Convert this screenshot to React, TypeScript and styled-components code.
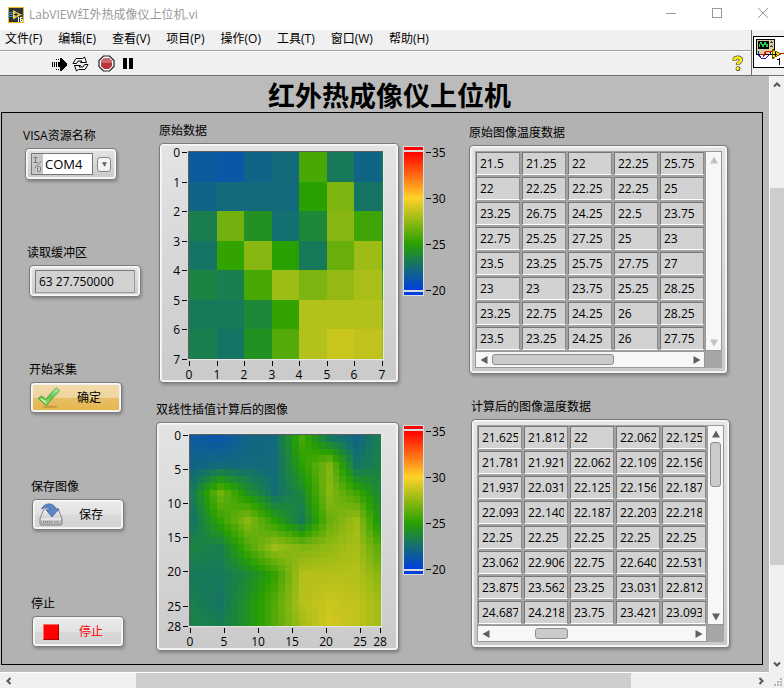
import React from "react";
import styled, { createGlobalStyle, css } from "styled-components";

const GlobalStyle = createGlobalStyle`
  * { box-sizing: border-box; }
  html, body { margin: 0; padding: 0; }
  body {
    font-family: "Open Sans", "Noto Sans CJK SC", sans-serif;
    font-size: 12px;
    line-height: 16px;
    color: #000;
  }
  button, input, select { font: inherit; color: inherit; margin: 0; }
`;

/* ---------- data ---------- */

const SAMPLES = [
  [21.5, 21.25, 22, 22.25, 25.75, 23, 22, 23.5],
  [22, 22.25, 22.25, 22.25, 25, 27, 22.75, 23.5],
  [23.25, 26.75, 24.25, 22.5, 23.75, 27.25, 25.5, 23.5],
  [22.75, 25.25, 27.25, 25, 23, 26.5, 27.75, 23.75],
  [23.5, 23.25, 25.75, 27.75, 27, 27.5, 28, 25.75],
  [23, 23, 23.75, 25.25, 28.25, 28.25, 28.25, 27],
  [23.25, 22.75, 24.25, 26, 28.25, 28.75, 28.5, 27.75],
  [23.5, 23.25, 24.25, 26, 27.75, 29, 28.5, 27.75],
];

const STEPS = 4;

function interpolate(source: number[][]): number[][] {
  const last = source.length - 1;
  const size = last * STEPS + 1;
  return Array.from({ length: size }, (_, r) =>
    Array.from({ length: size }, (_, c) => {
      const r0 = Math.min(Math.floor(r / STEPS), last - 1);
      const c0 = Math.min(Math.floor(c / STEPS), last - 1);
      const fr = r / STEPS - r0;
      const fc = c / STEPS - c0;
      const top = source[r0][c0] * (1 - fc) + source[r0][c0 + 1] * fc;
      const low = source[r0 + 1][c0] * (1 - fc) + source[r0 + 1][c0 + 1] * fc;
      return top * (1 - fr) + low * fr;
    })
  );
}

const RAMP: [number, number[]][] = [
  [20, [0, 62, 224]],
  [25, [40, 160, 0]],
  [30, [255, 210, 40]],
  [35, [255, 0, 0]],
];

function heatColor(value: number): string {
  const i = value < 25 ? 0 : value < 30 ? 1 : 2;
  const [v0, a] = RAMP[i];
  const [v1, b] = RAMP[i + 1];
  const t = (value - v0) / (v1 - v0);
  return `rgb(${a.map((x, k) => Math.round(x + (b[k] - x) * t)).join(",")})`;
}

const FINE = interpolate(SAMPLES);

const RAW_ROWS = SAMPLES.map((row) => row.slice(0, 5).map(String));

const FINE_ROWS = FINE.slice(0, 8).map((row) =>
  row.slice(6, 11).map((v) => String(v).slice(0, 6))
);

const MENUS = ["文件(F)", "编辑(E)", "查看(V)", "项目(P)", "操作(O)", "工具(T)", "窗口(W)", "帮助(H)"];

/* ---------- window chrome ---------- */

const Window = styled.div`
  display: flex;
  flex-direction: column;
  min-height: 100vh;
  background: #f0f0f0;
`;

const TitleBar = styled.header`
  display: flex;
  flex-shrink: 0;
  align-items: center;
  height: 30px;
  padding: 0 8px;
  background: #fff;
  color: #999;
`;

const TitleText = styled.span`
  flex: 1;
  margin-left: 5px;
  font-size: 12px;
`;

const WindowButtons = styled.div`
  display: flex;
  align-items: center;
  padding-bottom: 4px;
`;

const bare = css`
  display: flex;
  align-items: center;
  justify-content: center;
  padding: 0;
  border: 0;
  background: none;
`;

const CaptionButton = styled.button`
  ${bare}
  width: 46px;
  height: 24px;
  &:last-child { width: 45px; margin-right: -9px; }
`;

const Header = styled.div`
  display: flex;
  flex-shrink: 0;
  height: 46px;
  border-bottom: 1px solid #6c6c6c;
  overflow: hidden;
`;

const Bars = styled.div`
  flex: 1;
  min-width: 0;
`;

const MenuBar = styled.nav`
  display: flex;
  align-items: center;
  gap: 16px;
  height: 21px;
  padding: 0 5px 2px;
  border-bottom: 1px solid #a0a0a0;
`;

const MenuButton = styled.button`
  ${bare}
  white-space: nowrap;
`;

const Toolbar = styled.div`
  display: flex;
  align-items: center;
  height: 24px;
  padding: 0 7px 0 51px;
  border-top: 1px solid #fff;
`;

const ToolButton = styled.button<{ $gap?: number }>`
  ${bare}
  margin-right: ${(p) => p.$gap ?? 0}px;
`;

const Spacer = styled.div`
  flex: 1;
`;

const ViIconCell = styled.div`
  width: 33px;
  padding: 6px 0 0 1px;
  border-left: 1px solid #6c6c6c;
  overflow: hidden;
`;

/* ---------- work area ---------- */

const WorkArea = styled.div`
  flex: 1;
  display: grid;
  grid-template-columns: minmax(0, 1fr) 15px;
  grid-template-rows: 1fr 16px;
`;

const Canvas = styled.main`
  display: flex;
  flex-direction: column;
  padding: 0 6px 7px 1px;
  background: #bbb;
`;

const PanelTitle = styled.h1`
  flex-shrink: 0;
  margin: 0;
  height: 36px;
  padding-left: 15px;
  font-size: 27px;
  line-height: 40px;
  font-weight: 700;
  text-align: center;
`;

const FrontPanel = styled.section`
  flex: 1;
  display: grid;
  grid-template-columns: 154px 313px minmax(0, 1fr);
  border: 1px solid #000;
  background: #b2b2b2;
`;

const Column = styled.div<{ $top: number; $gap: number }>`
  display: flex;
  flex-direction: column;
  align-items: flex-start;
  gap: ${(p) => p.$gap}px;
  padding-top: ${(p) => p.$top}px;
`;

const ControlColumn = styled.div`
  padding: 15px 0 0 21px;
`;

const ControlGroup = styled.div<{ $indent: number }>`
  display: flex;
  flex-direction: column;
  align-items: flex-start;
  gap: 4px;
  height: 117px;
  padding-left: ${(p) => p.$indent}px;
  &:last-child { height: auto; }
`;

const Group = styled.div<{ $indent?: number }>`
  display: flex;
  flex-direction: column;
  align-items: flex-start;
  gap: 4px;
  padding-left: ${(p) => p.$indent ?? 0}px;
`;

const Caption = styled.label`
  height: 16px;
  white-space: nowrap;
`;

const bevel = css`
  border: 1px solid #7c7c7c;
  border-radius: 4px;
  box-shadow: inset 0 0 0 1px #f8f8f8, inset 0 0 0 2px #f0f0f0, 1px 2px 3px rgba(0, 0, 0, 0.25);
  background: linear-gradient(#e4e4e4, #cacaca);
`;

const Frame = styled.div`
  ${bevel}
  display: flex;
  padding: 5px;
`;

const FieldFrame = styled.div`
  ${bevel}
  display: flex;
  align-items: center;
  gap: 4px;
  height: 32px;
  margin-left: 2px;
  padding: 0 5px;
`;

const ResourceField = styled.div`
  display: flex;
  width: 62px;
  height: 22px;
  border: 1px solid #777;
  background: #c8c8c8;
`;

const ResourceSelect = styled.select`
  flex: 1;
  min-width: 0;
  appearance: none;
  border: 0;
  padding: 0 0 0 2px;
  background: #fff;
  font-size: 13px;
  border-radius: 0;
`;

const DropButton = styled.button`
  ${bare}
  width: 14px;
  height: 15px;
  border: 1px solid #888;
  border-radius: 3px;
  background: #f2f2f2;
`;

const BufferInput = styled.input`
  width: 100px;
  height: 23px;
  padding: 0 3px;
  border: 1px solid #777;
  border-right-color: #999;
  border-bottom-color: #999;
  background: #d2d2d2;
`;

const ActionButton = styled.button<{ $active?: boolean; $color?: string }>`
  ${bevel}
  display: grid;
  grid-template-columns: 26px 1fr;
  align-items: center;
  justify-items: center;
  width: 92px;
  height: 31px;
  margin-left: 1px;
  padding: 0 5px;
  color: ${(p) => p.$color ?? "#000"};
  background: ${(p) =>
    p.$active
      ? "linear-gradient(#f2dcae 0%, #efd49c 50%, #e6be68 52%, #e5b748 100%)"
      : "linear-gradient(#ebebeb 0%, #e2e2e2 50%, #d9d9d9 52%, #d2d2d2 100%)"};
`;

const ChartRow = styled.div`
  display: flex;
  gap: 4px;
  align-items: flex-start;
`;

const ChartSvg = styled.svg`
  display: block;
  overflow: visible;
  font-family: "Open Sans", sans-serif;
  font-size: 12px;
`;

/* ---------- numeric array ---------- */

const ArrayGrid = styled.div`
  display: grid;
  grid-template-columns: 230px 17px;
  grid-template-rows: 200px 17px;
  background: #a6a6a6;
`;

const DataTable = styled.table`
  border-collapse: separate;
  border-spacing: 0;
  background: #a2a2a2;
`;

const DataCell = styled.td`
  padding: 1px;
`;

const CellBox = styled.div`
  width: 44px;
  height: 23px;
  padding: 3px 3px 0;
  border: 1px solid #777;
  border-right-color: #888;
  border-bottom-color: #fff;
  background: #d2d2d2;
`;

const CellText = styled.span`
  display: block;
  overflow: hidden;
  white-space: nowrap;
`;

const MiniBar = styled.div<{ $vertical?: boolean }>`
  display: flex;
  flex-direction: ${(p) => (p.$vertical ? "column" : "row")};
  align-items: center;
  border: 1px solid #999;
  background: #f7f7f7;
`;

const MiniArrow = styled.button`
  ${bare}
  width: 15px;
  height: 15px;
`;

const MiniTrack = styled.div<{ $vertical?: boolean }>`
  flex: 1;
  display: flex;
  flex-direction: ${(p) => (p.$vertical ? "column" : "row")};
`;

const MiniThumb = styled.div<{ $vertical?: boolean; $start: number; $size: number }>`
  width: ${(p) => (p.$vertical ? 11 : p.$size)}px;
  height: ${(p) => (p.$vertical ? p.$size : 11)}px;
  ${(p) => (p.$vertical ? "margin-top" : "margin-left")}: ${(p) => p.$start}px;
  border: 1px solid #8e8e8e;
  border-radius: 3px;
  background: #cbcbcb;
`;

/* ---------- window scrollbars ---------- */

const ScrollBar = styled.div<{ $vertical?: boolean }>`
  display: flex;
  flex-direction: ${(p) => (p.$vertical ? "column" : "row")};
  ${(p) => (p.$vertical ? "border-left" : "border-top")}: 1px solid #fff;
  background: #f0f0f0;
`;

const ScrollArrow = styled.button`
  ${bare}
  flex: 0 0 17px;
  min-width: 14px;
`;

const ScrollPart = styled.div<{ $share: number; $thumb?: boolean }>`
  flex: ${(p) => p.$share} 1 0;
  background: ${(p) => (p.$thumb ? "#cdcdcd" : "transparent")};
`;

const GripCorner = styled.div`
  display: flex;
  align-items: flex-end;
  justify-content: flex-end;
  padding: 1px;
`;

/* ---------- icons ---------- */

const AppIcon = () => (
  <svg width="16" height="16" viewBox="0 0 16 16">
    <rect width="16" height="16" fill="#f5b91a" />
    <rect x="1" y="1" width="14" height="14" fill="#2b3338" />
    <path d="M0 5.500h5M0 7.500h5M0 9.500h5M12 7.500h4" stroke="#2f8fd0" />
    <path d="M5 3l8.500 4.800L5 12.500z" fill="#fbd04a" />
    <path d="M6 7.500h4M8 5.500v4" stroke="#222" />
    <rect x="9" y="10" width="6" height="5" fill="#2b3338" />
    <path d="M10.500 10v5M12.500 10v4.500h2v-2h-2M12.500 10.500h2" stroke="#fff" fill="none" />
  </svg>
);

const RunIcon = () => (
  <svg width="17" height="16" viewBox="0 0 17 16" shapeRendering="crispEdges">
    <path d="M1 6h1v5H1zM3 6h1v5H3zM5 3h1v1H5zM5 6h1v5H5zM5 13h1v1H5zM7 3h1v1H7zM7 13h1v1H7z" fill="#000" />
    <path d="M7 6h2V2h1l6 6v1l-6 6H9v-4H7z" fill="#000" />
  </svg>
);

const RunLoopIcon = () => (
  <svg width="17" height="16" viewBox="0 0 17 16">
    <path d="M1 7.500 4 2.500h6.500L12.500 1l2 5.500H8.500L10 5H6L4.500 7.500z" fill="#fff" stroke="#000" />
    <path d="M16 8.500l-3 5H6.500L4.500 15l-2-5.500h6L7 11h4l1.500-2.500z" fill="#fff" stroke="#000" />
  </svg>
);

const StopIcon = () => (
  <svg width="17" height="17" viewBox="0 0 17 17">
    <path d="M5.500 1h6L16 5.500v6L11.500 16h-6L1 11.500v-6z" fill="#fff" stroke="#222" strokeWidth="1.200" />
    <path d="M6 3h5l3 3v5l-3 3H6l-3-3V6z" fill="#b8343a" />
    <path d="M6 3h5l3 3v2H3V6z" fill="#cc6b6d" />
  </svg>
);

const PauseIcon = () => (
  <svg width="10" height="11" viewBox="0 0 10 11">
    <path d="M0 0h4v11H0zM6 0h4v11H6z" fill="#000" />
  </svg>
);

const HelpIcon = () => (
  <svg width="12" height="17" viewBox="0 0 12 17">
    <path d="M2.500 6V4.700C2.500 3.200 3.800 2.500 5.800 2.500s3.200 1 3.200 2.600c0 2-3.200 1.900-3.200 5" fill="none" stroke="#555" strokeWidth="4" />
    <path d="M2.500 5.500v-.8C2.500 3.200 3.800 2.500 5.800 2.500s3.200 1 3.200 2.600c0 2-3.200 1.900-3.200 4.500" fill="none" stroke="#fff200" strokeWidth="2.600" />
    <circle cx="6" cy="13.700" r="2.400" fill="#444" />
    <circle cx="5.800" cy="13.400" r="1.600" fill="#fff200" />
  </svg>
);

const ViIcon = () => (
  <svg width="32" height="32" viewBox="0 0 32 32" shapeRendering="crispEdges">
    <rect x="0.500" y="0.500" width="31" height="31" fill="#fff" stroke="#000" />
    <rect x="3" y="3" width="19" height="16" fill="#000" />
    <rect x="4" y="4" width="17" height="14" fill="#d8d0a0" />
    <rect x="5" y="5" width="11" height="8" fill="#000" />
    <path d="M6 11l1-3 1-2 2 5 2-5 2 5 1-3" fill="none" stroke="#20d050" />
    <path d="M18 5v2M17 6h3M18 9v2M17 10h3" stroke="#444" />
    <path d="M5 15v3l3 4h5l4-4v-3" fill="none" stroke="#1020b0" />
    <path d="M7 18h4l2-3h6M10 21l3-4" fill="none" stroke="#e01010" />
    <path d="M27 17h5" stroke="#e01010" />
    <path d="M19.500 13.500l8 4.500-8 4.500z" fill="#ffe000" stroke="#6a5c00" />
    <path d="M20 18h4M22 16v4" stroke="#000" />
    <path d="M24 23h2v-1h1v7h-1v-5h-2z" fill="#000" />
  </svg>
);

const IoIcon = () => (
  <svg width="11" height="20" viewBox="0 0 11 20" fill="none" stroke="#777" strokeWidth="1">
    <path d="M1.500 3.500h4M3.500 3.500v5M1.500 8.500h4M2 14.500 9.500 7" />
    <rect x="5.500" y="12.500" width="3" height="5" rx="1" />
  </svg>
);

const CheckIcon = () => (
  <svg width="24" height="22" viewBox="0 0 24 22">
    <defs>
      <linearGradient id="check" x1="0" y1="0" x2="0" y2="1">
        <stop offset="0" stopColor="#c4f0b4" />
        <stop offset="0.500" stopColor="#5cc850" />
        <stop offset="1" stopColor="#a4e05a" />
      </linearGradient>
    </defs>
    <ellipse cx="13" cy="19.800" rx="8" ry="1.200" fill="#a88a3c" opacity="0.600" />
    <path d="M1 11.500 4.500 9 9 12.500C12 8 16 4 19.500 1L22.500 4C18 8 13.500 13 9.500 18.500z" fill="url(#check)" stroke="#3c9a3a" strokeWidth="0.900" />
    <path d="M4 12 9 15.500" fill="none" stroke="#e4f8d8" strokeWidth="1.200" />
  </svg>
);

const SaveIcon = () => (
  <svg width="24" height="24" viewBox="0 0 24 24">
    <defs>
      <linearGradient id="disk" x1="0" y1="0" x2="0" y2="1">
        <stop offset="0" stopColor="#fafafa" />
        <stop offset="1" stopColor="#b0b0b0" />
      </linearGradient>
    </defs>
    <path d="M5 6h14l4 9.500v5q0 1.500-1.500 1.500h-19Q1 22 1 20.500v-5z" fill="url(#disk)" stroke="#858585" />
    <path d="M2 16h20" stroke="#fff" />
    <path d="M4 19h10" stroke="#888" strokeWidth="2" strokeDasharray="1 1" />
    <path d="M15 19h5" stroke="#aaa" strokeWidth="2" />
    <path d="M2.500 6C5-.5 15-1 17 6h3L13 14 7 7h4C9.500 3.500 5.500 4 2.500 6z" fill="#5b85c4" stroke="#3d669f" strokeWidth="0.800" />
  </svg>
);

const StopSquare = () => (
  <svg width="16" height="16" viewBox="0 0 16 16">
    <rect width="16" height="16" fill="#a00" />
    <path d="M0 0h16l-1 1v14H1L0 16z" fill="#ff6a6a" />
    <rect x="1" y="1" width="14" height="14" fill="#f00" />
  </svg>
);

type Direction = "up" | "down" | "left" | "right";
const ANGLE: Record<Direction, number> = { up: 0, right: 90, down: 180, left: 270 };

const Triangle = ({ dir, color = "#606060", size = 8 }: { dir: Direction; color?: string; size?: number }) => (
  <svg width={size} height={size} viewBox="0 0 8 8">
    <path d="M4 0.500 8 7.500H0z" fill={color} transform={`rotate(${ANGLE[dir]} 4 4)`} />
  </svg>
);

const Chevron = ({ dir }: { dir: Direction }) => (
  <svg width="8" height="8" viewBox="0 0 8 8">
    <path d="M1 5.500 4 2.500 7 5.500" fill="none" stroke="#555" strokeWidth="2" transform={`rotate(${ANGLE[dir]} 4 4)`} />
  </svg>
);

/* ---------- charts ---------- */

interface HeatProps {
  grid: number[][];
  ticks: number[];
  viewWidth: number;
  viewHeight: number;
  left: number;
  top: number;
  plotWidth: number;
  plotHeight: number;
  name: string;
}

function HeatChart({ grid, ticks, viewWidth, viewHeight, left, top, plotWidth, plotHeight, name }: HeatProps) {
  const n = grid.length - 1;
  const px = (i: number) => left + Math.round((i * plotWidth) / n);
  const py = (i: number) => top + Math.round((i * plotHeight) / n);
  const right = left + plotWidth;
  const bottom = top + plotHeight;
  return (
    <ChartSvg width={viewWidth} height={viewHeight} role="img" aria-label={name}>
      <g shapeRendering="crispEdges">
        <rect x={left - 1} y={top - 1} width={plotWidth + 3} height={plotHeight + 2} fill="#e6e6e6" />
        <path d={`M${left - 1} ${bottom}V${top - 1}H${right + 1}v1H${left}V${bottom}z`} fill="#5c5c5c" />
        {grid.slice(0, n).map((row, r) =>
          row.map((v, c) => (
            <rect
              key={`${r}-${c}`}
              x={px(c)}
              y={py(r)}
              width={c === n ? 1 : px(c + 1) - px(c)}
              height={py(r + 1) - py(r)}
              fill={heatColor(v)}
            />
          ))
        )}
        {ticks.map((t) => (
          <React.Fragment key={t}>
            <rect x={left - 7} y={py(t)} width={5} height={1} />
            <rect x={px(t)} y={bottom + 2} width={1} height={5} />
          </React.Fragment>
        ))}
      </g>
      {ticks.map((t) => (
        <React.Fragment key={t}>
          <text x={left - 9} y={py(t) + 5} textAnchor="end">{t}</text>
          <text x={px(t)} y={bottom + 20} textAnchor="middle">{t}</text>
        </React.Fragment>
      ))}
    </ChartSvg>
  );
}

function ColorScale({ id }: { id: string }) {
  return (
    <ChartSvg width="44" height="156" role="img" aria-label="20 – 35">
      <defs>
        <linearGradient id={id} x1="0" y1="0" x2="0" y2="1">
          {[...RAMP].reverse().map(([v, rgb]) => (
            <stop key={v} offset={(35 - v) / 15} stopColor={`rgb(${rgb.join(",")})`} />
          ))}
        </linearGradient>
      </defs>
      <rect y="3" width="21" height="150" fill="#dcdcdc" />
      <rect x="1" y="4" width="19" height="3" fill="#f00" />
      <rect x="1" y="9" width="19" height="138" fill={`url(#${id})`} />
      <rect x="1" y="149" width="19" height="3" fill="#003ee0" />
      {[35, 30, 25, 20].map((v, i) => (
        <React.Fragment key={v}>
          <rect x="23" y={9 + i * 46} width="5" height="1" />
          <text x="29" y={14 + i * 46}>{v}</text>
        </React.Fragment>
      ))}
    </ChartSvg>
  );
}

/* ---------- arrays ---------- */

interface Thumb {
  start: number;
  size: number;
}

function MiniScroll({ vertical, thumb }: { vertical?: boolean; thumb?: Thumb }) {
  const color = thumb ? "#606060" : "#c2c2c2";
  return (
    <MiniBar $vertical={vertical}>
      <MiniArrow aria-label={vertical ? "up" : "left"} disabled={!thumb}>
        <Triangle dir={vertical ? "up" : "left"} color={color} />
      </MiniArrow>
      <MiniTrack $vertical={vertical}>
        {thumb && <MiniThumb $vertical={vertical} $start={thumb.start} $size={thumb.size} />}
      </MiniTrack>
      <MiniArrow aria-label={vertical ? "down" : "right"} disabled={!thumb}>
        <Triangle dir={vertical ? "down" : "right"} color={color} />
      </MiniArrow>
    </MiniBar>
  );
}

function NumericArray({ labelId, rows, across, down }: { labelId: string; rows: string[][]; across: Thumb; down?: Thumb }) {
  return (
    <Frame>
      <ArrayGrid>
        <DataTable aria-labelledby={labelId}>
          <tbody>
            {rows.map((row, r) => (
              <tr key={r}>
                {row.map((v, c) => (
                  <DataCell key={c}>
                    <CellBox>
                      <CellText>{v}</CellText>
                    </CellBox>
                  </DataCell>
                ))}
              </tr>
            ))}
          </tbody>
        </DataTable>
        <MiniScroll vertical thumb={down} />
        <MiniScroll thumb={across} />
      </ArrayGrid>
    </Frame>
  );
}

/* ---------- page ---------- */

export default function App() {
  return (
    <Window>
      <GlobalStyle />
      <TitleBar>
        <AppIcon />
        <TitleText>LabVIEW红外热成像仪上位机.vi</TitleText>
        <WindowButtons>
          <CaptionButton aria-label="最小化">
            <svg width="10" height="10"><path d="M0 5.500h10" stroke="#999" /></svg>
          </CaptionButton>
          <CaptionButton aria-label="最大化">
            <svg width="10" height="10"><rect x="0.500" y="0.500" width="9" height="9" fill="none" stroke="#999" /></svg>
          </CaptionButton>
          <CaptionButton aria-label="关闭">
            <svg width="10" height="10"><path d="M0 0l10 10M10 0 0 10" stroke="#999" /></svg>
          </CaptionButton>
        </WindowButtons>
      </TitleBar>

      <Header>
        <Bars>
          <MenuBar>
            {MENUS.map((m) => (
              <MenuButton key={m}>{m}</MenuButton>
            ))}
          </MenuBar>
          <Toolbar>
            <ToolButton $gap={4} aria-label="运行"><RunIcon /></ToolButton>
            <ToolButton $gap={9} aria-label="连续运行"><RunLoopIcon /></ToolButton>
            <ToolButton $gap={8} aria-label="中止执行"><StopIcon /></ToolButton>
            <ToolButton aria-label="暂停"><PauseIcon /></ToolButton>
            <Spacer />
            <ToolButton aria-label="帮助"><HelpIcon /></ToolButton>
          </Toolbar>
        </Bars>
        <ViIconCell><ViIcon /></ViIconCell>
      </Header>

      <WorkArea>
        <Canvas>
          <PanelTitle>红外热成像仪上位机</PanelTitle>
          <FrontPanel>
            <ControlColumn>
              <ControlGroup $indent={0}>
                <Caption htmlFor="visa">VISA资源名称</Caption>
                <FieldFrame>
                  <ResourceField>
                    <IoIcon />
                    <ResourceSelect id="visa" defaultValue="COM4">
                      <option>COM4</option>
                    </ResourceSelect>
                  </ResourceField>
                  <DropButton aria-label="选择资源"><Triangle dir="down" size={5} /></DropButton>
                </FieldFrame>
              </ControlGroup>
              <ControlGroup $indent={4}>
                <Caption htmlFor="buffer">读取缓冲区</Caption>
                <FieldFrame>
                  <BufferInput id="buffer" readOnly value="63 27.750000" />
                </FieldFrame>
              </ControlGroup>
              <ControlGroup $indent={6}>
                <Caption htmlFor="start">开始采集</Caption>
                <ActionButton id="start" $active>
                  <CheckIcon />
                  <span>确定</span>
                </ActionButton>
              </ControlGroup>
              <ControlGroup $indent={8}>
                <Caption htmlFor="save">保存图像</Caption>
                <ActionButton id="save">
                  <SaveIcon />
                  <span>保存</span>
                </ActionButton>
              </ControlGroup>
              <ControlGroup $indent={8}>
                <Caption htmlFor="stop">停止</Caption>
                <ActionButton id="stop" $color="#f00">
                  <StopSquare />
                  <span>停止</span>
                </ActionButton>
              </ControlGroup>
            </ControlColumn>

            <Column $top={10} $gap={19}>
              <Group $indent={3}>
                <Caption as="span">原始数据</Caption>
                <ChartRow>
                  <Frame>
                    <HeatChart
                      name="原始数据"
                      grid={SAMPLES}
                      ticks={[0, 1, 2, 3, 4, 5, 6, 7]}
                      viewWidth={228}
                      viewHeight={228}
                      left={24}
                      top={3}
                      plotWidth={193}
                      plotHeight={207}
                    />
                  </Frame>
                  <ColorScale id="scale-raw" />
                </ChartRow>
              </Group>
              <Group>
                <Caption as="span">双线性插值计算后的图像</Caption>
                <ChartRow>
                  <Frame>
                    <HeatChart
                      name="双线性插值计算后的图像"
                      grid={FINE}
                      ticks={[0, 5, 10, 15, 20, 25, 28]}
                      viewWidth={231}
                      viewHeight={217}
                      left={28}
                      top={7}
                      plotWidth={190}
                      plotHeight={191}
                    />
                  </Frame>
                  <ColorScale id="scale-fine" />
                </ChartRow>
              </Group>
            </Column>

            <Column $top={12} $gap={25}>
              <Group>
                <Caption as="span" id="raw-values">原始图像温度数据</Caption>
                <NumericArray labelId="raw-values" rows={RAW_ROWS} across={{ start: 1, size: 122 }} />
              </Group>
              <Group $indent={2}>
                <Caption as="span" id="fine-values">计算后的图像温度数据</Caption>
                <NumericArray
                  labelId="fine-values"
                  rows={FINE_ROWS}
                  across={{ start: 42, size: 33 }}
                  down={{ start: 1, size: 45 }}
                />
              </Group>
            </Column>
          </FrontPanel>
        </Canvas>

        <ScrollBar $vertical>
          <ScrollArrow aria-label="向上滚动"><Chevron dir="up" /></ScrollArrow>
          <ScrollPart $share={95} />
          <ScrollPart $share={377} $thumb />
          <ScrollPart $share={90} />
          <ScrollArrow aria-label="向下滚动"><Chevron dir="down" /></ScrollArrow>
        </ScrollBar>
        <ScrollBar>
          <ScrollArrow aria-label="向左滚动"><Chevron dir="left" /></ScrollArrow>
          <ScrollPart $share={119} />
          <ScrollPart $share={495} $thumb />
          <ScrollPart $share={121} />
          <ScrollArrow aria-label="向右滚动"><Chevron dir="right" /></ScrollArrow>
        </ScrollBar>
        <GripCorner>
          <svg width="9" height="9" fill="#b4b4b4">
            <path d="M6 0h2v2H6zM3 3h2v2H3zM6 3h2v2H6zM0 6h2v2H0zM3 6h2v2H3zM6 6h2v2H6z" />
          </svg>
        </GripCorner>
      </WorkArea>
    </Window>
  );
}
